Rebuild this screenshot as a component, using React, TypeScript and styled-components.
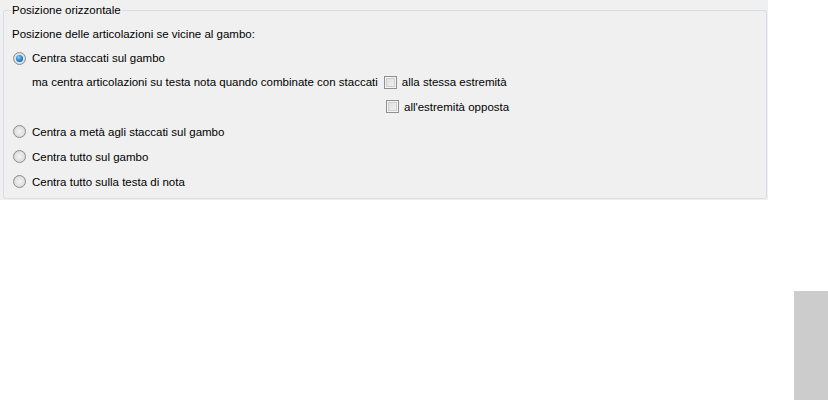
import * as React from 'react'
import styled, { createGlobalStyle } from 'styled-components'

const GlobalStyle = createGlobalStyle`
  html, body {
    margin: 0;
    padding: 0;
    background: #ffffff;
  }
  body {
    font-family: 'Liberation Sans', Arial, sans-serif;
    font-size: 11.5px;
    color: #000000;
  }
`

const Page = styled.div`
  position: relative;
  width: 828px;
  height: 400px;
  overflow: hidden;
`

const Panel = styled.div`
  width: 768px;
  height: 200px;
  background: #f0f0f0;
  padding: 3px 2px 0 3px;
  box-sizing: border-box;
`

const GroupBox = styled.fieldset`
  margin: 0;
  padding: 10px 0 0 8px;
  width: 764px;
  height: 196px;
  box-sizing: border-box;
  border: 1px solid #d5dfe5;
  border-radius: 3px;
`

const Legend = styled.legend`
  margin-left: -1px;
  padding: 0 1px;
  font-size: 11.5px;
  line-height: 14px;
  color: #000;
`

const Intro = styled.div`
  height: 19px;
  line-height: 14px;
`

const Row = styled.div<{ indent?: boolean; tall?: boolean }>`
  display: flex;
  align-items: center;
  height: ${({ tall }) => (tall ? '25px' : '24px')};
  padding-left: ${({ indent }) => (indent ? '20px' : '1px')};
  gap: 6px;
`

const Label = styled.span`
  white-space: nowrap;
`

const CheckGroup = styled.div`
  display: flex;
  align-items: center;
  gap: 5px;
`

const ExtraRow = styled(Row)`
  padding-left: 374px;
`

const Radio = styled.span<{ checked?: boolean }>`
  position: relative;
  display: inline-block;
  width: 13px;
  height: 13px;
  border-radius: 50%;
  box-sizing: border-box;
  border: 1px solid #8d8d8d;
  background: radial-gradient(circle at 50% 50%, #f4f4f4 0%, #e2e2e2 55%, #c9c9c9 100%);
  flex-shrink: 0;
  &::after {
    content: '';
    display: ${({ checked }) => (checked ? 'block' : 'none')};
    position: absolute;
    left: 2px;
    top: 2px;
    width: 7px;
    height: 7px;
    border-radius: 50%;
    background: radial-gradient(circle at 40% 35%, #8fd2ff 0%, #2b8ed6 45%, #0f4e8a 100%);
  }
`

const Checkbox = styled.span`
  display: inline-block;
  width: 13px;
  height: 13px;
  box-sizing: border-box;
  border: 1px solid #8f8f8f;
  background: linear-gradient(135deg, #dcdcdc 0%, #f2f2f2 100%);
  box-shadow: inset 0 0 0 1px #f4f4f4, inset 0 0 0 2px #cfcfcf;
  flex-shrink: 0;
`

const SideBlock = styled.div`
  position: absolute;
  right: 0;
  top: 291px;
  width: 34px;
  height: 109px;
  background: #cccccc;
`

const options = [
  'Centra a metà agli staccati sul gambo',
  'Centra tutto sul gambo',
  'Centra tutto sulla testa di nota',
]

export default function App() {
  return (
    <Page>
      <GlobalStyle />
      <Panel>
        <GroupBox>
          <Legend>Posizione orizzontale</Legend>
          <Intro>Posizione delle articolazioni se vicine al gambo:</Intro>
          <Row>
            <Radio checked />
            <Label>Centra staccati sul gambo</Label>
          </Row>
          <Row indent>
            <Label>ma centra articolazioni su testa nota quando combinate con staccati</Label>
            <CheckGroup>
              <Checkbox />
              <Label>alla stessa estremità</Label>
            </CheckGroup>
          </Row>
          <ExtraRow tall>
            <CheckGroup>
              <Checkbox />
              <Label>all'estremità opposta</Label>
            </CheckGroup>
          </ExtraRow>
          {options.map((o) => (
            <Row key={o} tall>
              <Radio />
              <Label>{o}</Label>
            </Row>
          ))}
        </GroupBox>
      </Panel>
      <SideBlock />
    </Page>
  )
}
